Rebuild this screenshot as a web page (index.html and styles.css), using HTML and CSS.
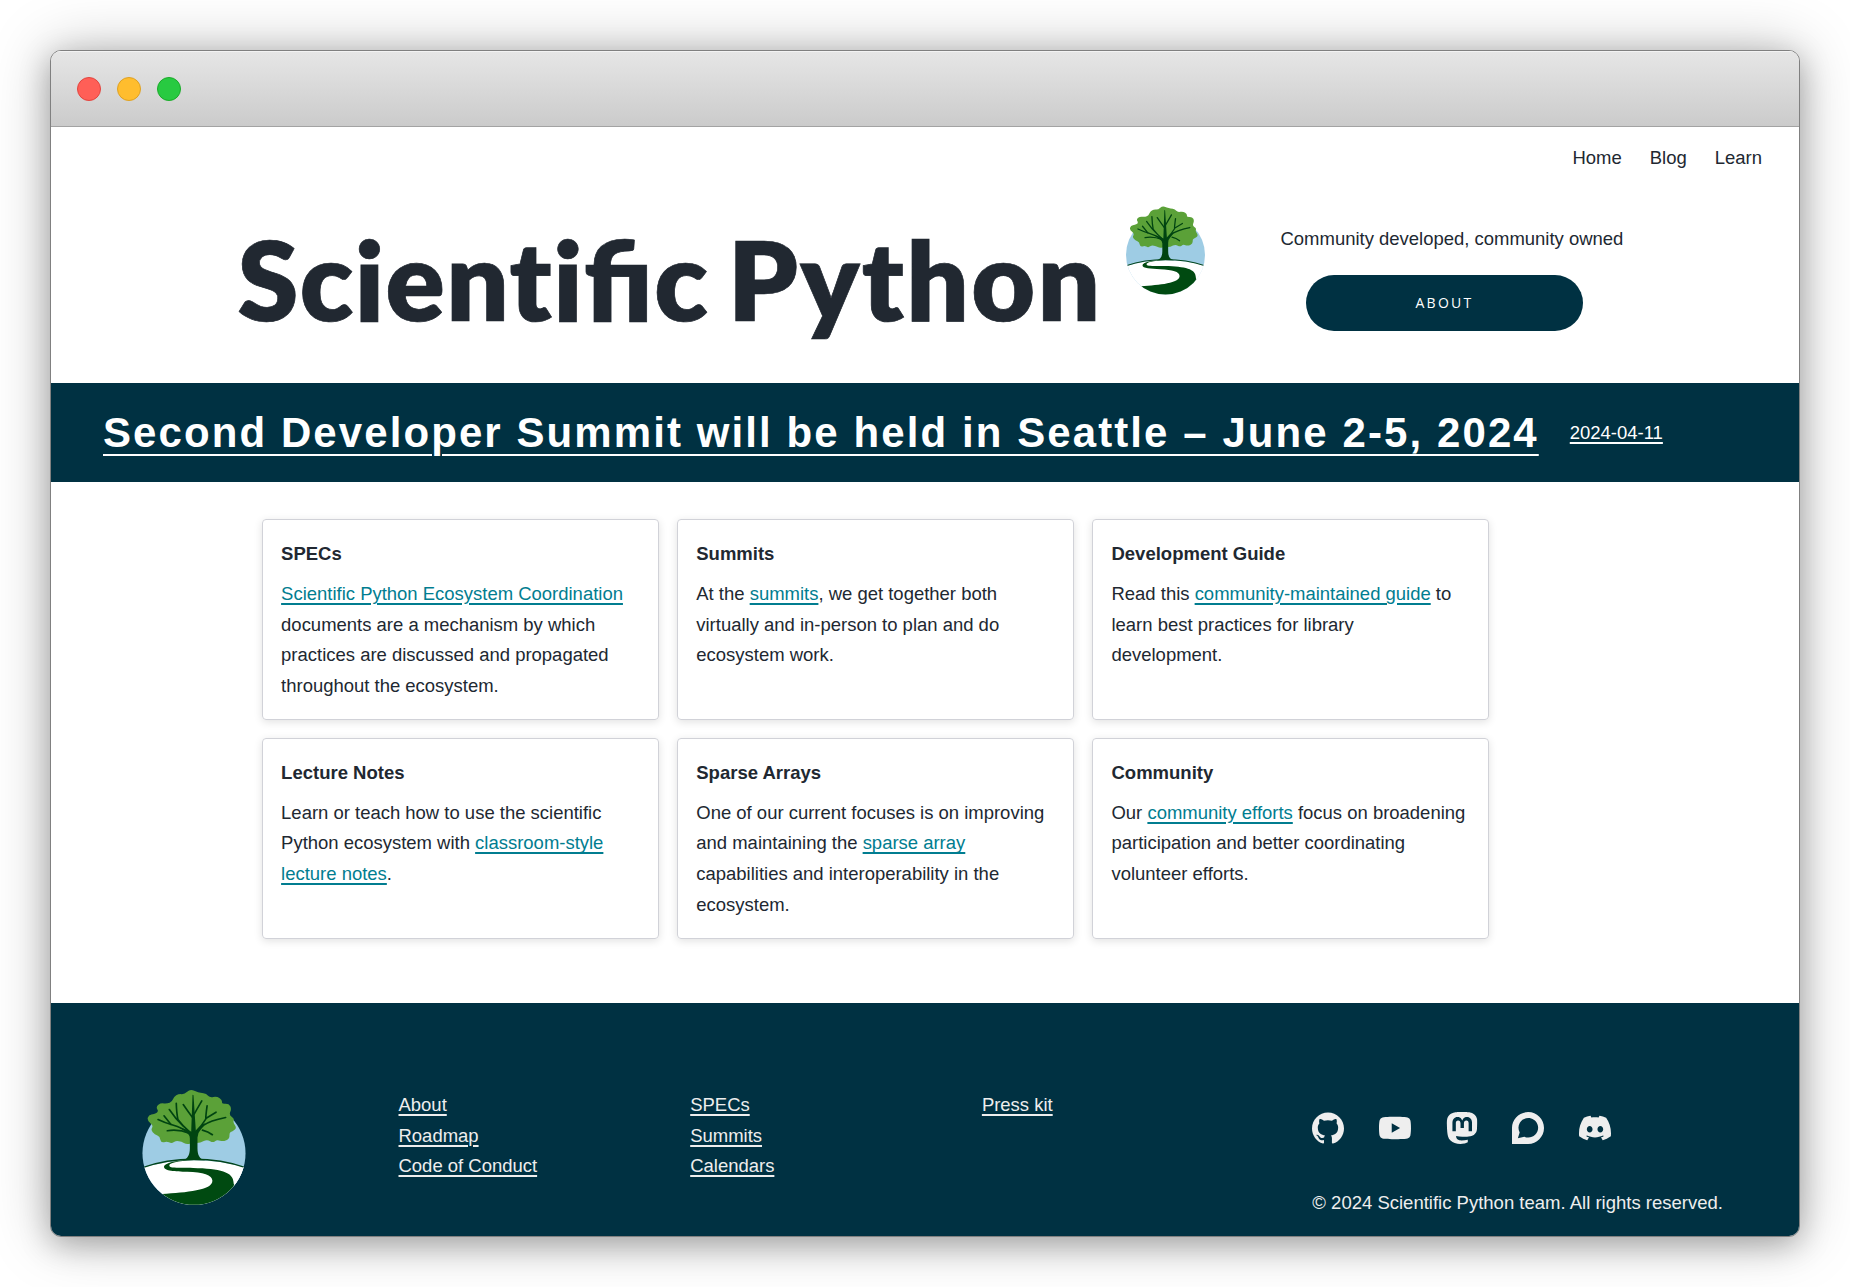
FILE: index.html
```html
<!DOCTYPE html>
<html lang="en">
<head>
<meta charset="utf-8">
<title>Scientific Python</title>
<link rel="stylesheet" href="styles.css">
</head>
<body>
<svg class="defs" width="0" height="0" aria-hidden="true">
  <symbol id="logo" viewBox="37 59 311 347">
    <clipPath id="disc"><circle cx="192.500" cy="250" r="155.500"/></clipPath>
    <g clip-path="url(#disc)">
      <rect x="30" y="60" width="330" height="350" fill="#9ecce4"/>
      <path d="M30 296Q190 246 360 296V420H30Z" fill="#fff"/>
      <path d="M37 293Q110 268 192 268Q275 268 348 293" fill="none" stroke="#00441b" stroke-width="4"/>
      <path d="M165 271C135 272 104 280 102 290C101 304 135 304 172 306C220 308 248 315 248 333C248 362 170 368 96 373L130 410H280L345 350C322 350 312 350 312 339C312 305 270 296 190 294C140 293 118 296 118 287C118 279 140 273 192 271Z" fill="#004a11"/>
      <path d="M312 325V350L330 365L348 292H340C335 312 325 332 312 348Z" fill="#fff"/>
    </g>
    <path d="M172 64Q180 57 189 60Q198 63 205 65.500Q212 67 221 68.500Q230 70 235 76Q240 82 251 80Q262 78 270 84Q278 90 277 95.500Q276 101 287 100.500Q298 100 302 108Q306 116 302 125Q298 134 306 140Q315 146 312 151Q310 156 316 165Q322 174 315 179Q308 184 303.500 186Q299 188 299.500 197Q300 206 290 210.500Q280 215 271 212Q262 208 256 213.500Q250 219 241 213.500Q232 208 222 213Q212 219 201 219Q190 219 180 221Q170 223 162 219Q155 215 147 214Q140 211 132 216Q125 222 117 217Q110 213 102 216.500Q93 219 91 209Q90 200 82 196.500Q74 193 68 186.500Q62 180 66 173Q70 166 61 159Q51 152 53 143Q56 134 64 133Q72 132 79 128.500Q86 124 82 117.500Q77 110 85 103.500Q92 98 102 99.500Q112 100 119 97.500Q126 95 129 87Q132 79 139 75Q146 71 155 71.500Q164 72 172 64Z" fill="#5ba138"/>
    <g fill="none" stroke="#004411" stroke-linecap="round" stroke-linejoin="round">
      <path d="M84 148Q105 158 126 164Q160 174 183 192" stroke-width="5"/>
      <path d="M112 182Q145 176 180 190M102 137L123 163M118 118Q138 148 160 168M139 99Q140 130 144 148M142 146Q158 168 184 190" stroke-width="5"/>
      <path d="M160 103Q175 125 188 142M216 92Q202 116 193 132" stroke-width="5"/>
      <path d="M232 107Q228 135 228 147Q218 164 199 184M259 126L228 145M288 142Q240 152 222 165L199 186M218 180Q235 184 248 194" stroke-width="5"/>
    </g>
    <path d="M188 74Q190 72 191 75L198 182L213 167L228 158L213 178Q203 189 203 202V235C203 257 210 268 226 271H158C172 268 180 257 180 235V205Q180 194 168 186L148 172L174 180L184 185Z" fill="#004411"/>
  </symbol>
</svg>
<div class="window">
  <div class="titlebar"><span class="dot red"></span><span class="dot yellow"></span><span class="dot green"></span></div>
  <nav class="nav"><a>Home</a><a>Blog</a><a>Learn</a></nav>
  <header class="hero">
    <h1 class="title">Scienti<span class="joined">fi</span>c <span class="python">Python</span></h1>
    <svg class="hero-logo"><use href="#logo"/></svg>
    <div class="tagline">
      <p>Community developed, community owned</p>
      <a class="button">ABOUT</a>
    </div>
  </header>
  <section class="news"><a class="headline">Second Developer Summit will be held in Seattle – June 2-5, 2024</a><a class="date">2024-04-11</a></section>
  <main class="cards">
    <article class="card"><h2>SPECs</h2><p><a>Scientific Python Ecosystem Coordination</a> documents are a mechanism by which practices are discussed and propagated throughout the ecosystem.</p></article>
    <article class="card"><h2>Summits</h2><p>At the <a>summits</a>, we get together both virtually and in-person to plan and do ecosystem work.</p></article>
    <article class="card"><h2>Development Guide</h2><p>Read this <a>community-maintained guide</a> to learn best practices for library development.</p></article>
    <article class="card"><h2>Lecture Notes</h2><p>Learn or teach how to use the scientific Python ecosystem with <a>classroom-style lecture notes</a>.</p></article>
    <article class="card"><h2>Sparse Arrays</h2><p>One of our current focuses is on improving and maintaining the <a>sparse array</a> capabilities and interoperability in the ecosystem.</p></article>
    <article class="card"><h2>Community</h2><p>Our <a>community efforts</a> focus on broadening participation and better coordinating volunteer efforts.</p></article>
  </main>
  <footer class="footer">
    <svg class="footer-logo"><use href="#logo"/></svg>
    <ul class="links"><li><a>About</a></li><li><a>Roadmap</a></li><li><a>Code of Conduct</a></li></ul>
    <ul class="links"><li><a>SPECs</a></li><li><a>Summits</a></li><li><a>Calendars</a></li></ul>
    <ul class="links"><li><a>Press kit</a></li></ul>
    <div class="social-block">
      <div class="social">
        <svg viewBox="0 0 24 24"><path d="M12 .297c-6.63 0-12 5.373-12 12 0 5.303 3.438 9.8 8.205 11.385.6.113.82-.258.82-.577 0-.285-.01-1.04-.015-2.04-3.338.724-4.042-1.61-4.042-1.61C4.422 18.07 3.633 17.7 3.633 17.7c-1.087-.744.084-.729.084-.729 1.205.084 1.838 1.236 1.838 1.236 1.07 1.835 2.809 1.305 3.495.998.108-.776.417-1.305.76-1.605-2.665-.3-5.466-1.332-5.466-5.93 0-1.31.465-2.38 1.235-3.22-.135-.303-.54-1.523.105-3.176 0 0 1.005-.322 3.3 1.23.96-.267 1.98-.399 3-.405 1.02.006 2.04.138 3 .405 2.28-1.552 3.285-1.23 3.285-1.23.645 1.653.24 2.873.12 3.176.765.84 1.23 1.91 1.23 3.22 0 4.61-2.805 5.625-5.475 5.92.42.36.81 1.096.81 2.22 0 1.606-.015 2.896-.015 3.286 0 .315.21.69.825.57C20.565 22.092 24 17.592 24 12.297c0-6.627-5.373-12-12-12"/></svg>
        <svg viewBox="0 0 24 24"><path d="M23.498 6.186a3.016 3.016 0 0 0-2.122-2.136C19.505 3.545 12 3.545 12 3.545s-7.505 0-9.377.505A3.017 3.017 0 0 0 .502 6.186C0 8.070 0 12 0 12s0 3.930.502 5.814a3.016 3.016 0 0 0 2.122 2.136c1.871.505 9.376.505 9.376.505s7.505 0 9.377-.505a3.015 3.015 0 0 0 2.122-2.136C24 15.930 24 12 24 12s0-3.930-.502-5.814zM9.545 15.568V8.432L15.818 12l-6.273 3.568z"/></svg>
        <svg viewBox="0 0 24 24"><path d="M23.268 5.313c-.35-2.578-2.617-4.61-5.304-5.004C17.51.242 15.792 0 11.813 0h-.03c-3.98 0-4.835.242-5.288.309C3.882.692 1.496 2.518.917 5.127.64 6.412.61 7.837.661 9.143c.074 1.874.088 3.745.26 5.611.118 1.24.325 2.47.62 3.68.55 2.237 2.777 4.098 4.96 4.857 2.336.792 4.849.923 7.256.38.265-.061.527-.132.786-.213.585-.184 1.27-.39 1.774-.753a.057.057 0 0 0 .023-.043v-1.809a.052.052 0 0 0-.02-.041.053.053 0 0 0-.046-.01 20.282 20.282 0 0 1-4.709.545c-2.73 0-3.463-1.284-3.674-1.818a5.593 5.593 0 0 1-.319-1.433.053.053 0 0 1 .066-.054c1.517.363 3.072.546 4.632.546.376 0 .75 0 1.125-.01 1.57-.044 3.224-.124 4.768-.422.038-.008.077-.015.11-.024 2.435-.464 4.753-1.92 4.989-5.604.008-.145.03-1.52.03-1.67.002-.512.167-3.63-.024-5.545zm-3.748 9.195h-2.561V8.29c0-1.309-.55-1.976-1.67-1.976-1.23 0-1.846.79-1.846 2.35v3.403h-2.546V8.663c0-1.56-.617-2.35-1.848-2.35-1.112 0-1.668.668-1.67 1.977v6.218H4.822V8.102c0-1.31.337-2.35 1.011-3.12.696-.77 1.608-1.164 2.74-1.164 1.311 0 2.302.5 2.962 1.498l.638 1.06.638-1.06c.66-.999 1.65-1.498 2.96-1.498 1.13 0 2.043.395 2.74 1.164.675.77 1.012 1.81 1.012 3.12z"/></svg>
        <svg viewBox="0 0 24 24"><path d="M12.103 0C18.666 0 24 5.485 24 11.997c0 6.51-5.33 11.99-11.9 11.99L0 24V11.79C0 5.28 5.532 0 12.103 0zm.116 4.563c-2.593-.003-4.996 1.352-6.337 3.57-1.33 2.208-1.387 4.957-.148 7.22L4.4 19.61l4.794-1.074c2.745 1.225 5.965.676 8.136-1.39 2.17-2.054 2.86-5.228 1.737-7.997-1.135-2.778-3.84-4.59-6.84-4.585h-.008z"/></svg>
        <svg viewBox="0 0 24 24"><path d="M20.317 4.3698a19.7913 19.7913 0 00-4.8851-1.5152.0741.0741 0 00-.0785.0371c-.211.3753-.4447.8648-.6083 1.2495-1.8447-.2762-3.68-.2762-5.4868 0-.1636-.3933-.4058-.8742-.6177-1.2495a.077.077 0 00-.0785-.037 19.7363 19.7363 0 00-4.8852 1.515.0699.0699 0 00-.0321.0277C.5334 9.0458-.319 13.5799.0992 18.0578a.0824.0824 0 00.0312.0561c2.0528 1.5076 4.0413 2.4228 5.9929 3.0294a.0777.0777 0 00.0842-.0276c.4616-.6304.8731-1.2952 1.226-1.9942a.076.076 0 00-.0416-.1057c-.6528-.2476-1.2743-.5495-1.8722-.8923a.077.077 0 01-.0076-.1277c.1258-.0943.2517-.1923.3718-.2914a.0743.0743 0 01.0776-.0105c3.9278 1.7933 8.18 1.7933 12.0614 0a.0739.0739 0 01.0785.0095c.1202.099.246.1981.3728.2924a.077.077 0 01-.0066.1276 12.2986 12.2986 0 01-1.873.8914.0766.0766 0 00-.0407.1067c.3604.698.7719 1.3628 1.225 1.9932a.076.076 0 00.0842.0286c1.961-.6067 3.9495-1.5219 6.0023-3.0294a.077.077 0 00.0313-.0552c.5004-5.177-.8382-9.6739-3.5485-13.6604a.061.061 0 00-.0312-.0286zM8.02 15.3312c-1.1825 0-2.1569-1.0857-2.1569-2.419 0-1.3332.9555-2.4189 2.157-2.4189 1.2108 0 2.1757 1.0952 2.1568 2.419 0 1.3332-.9555 2.4189-2.1569 2.4189zm7.9748 0c-1.1825 0-2.1569-1.0857-2.1569-2.419 0-1.3332.9554-2.4189 2.1569-2.4189 1.2108 0 2.1757 1.0952 2.1568 2.419 0 1.3332-.946 2.4189-2.1568 2.4189Z"/></svg>
      </div>
      <p>© 2024 Scientific Python team. All rights reserved.</p>
    </div>
  </footer>
</div>
</body>
</html>
```
FILE: styles.css
```css
* { box-sizing: border-box; }
body { margin: 0; padding: 50px; background: #fff; height: 1287px; overflow: hidden; font: 18.480px/30.600px "Liberation Sans", Arial, sans-serif; color: #212831; }
h1, h2, p, ul { margin: 0; padding: 0; }
.defs { display: block; height: 0; }
.window { width: 1750px; height: 1187px; border: 1px solid #808080; border-radius: 11px; overflow: hidden; background: #fff; box-shadow: 0 0 60px rgba(0,0,0,.25), 0 8px 30px rgba(0,0,0,.25); display: flex; flex-direction: column; }
.titlebar { height: 76px; flex: none; display: flex; gap: 16px; padding: 26px 0 0 26px; background: linear-gradient(#e6e6e6, #cbcbcb); border-bottom: 1px solid #a3a3a3; box-shadow: inset 0 1px #f3f3f3; }
.dot { width: 24px; height: 24px; border-radius: 50%; border: 1px solid; }
.red { background: #ff5f57; border-color: #e2453f; }
.yellow { background: #ffbd2e; border-color: #dea123; }
.green { background: #28ca41; border-color: #1aab29; }
.nav { display: flex; justify-content: flex-end; gap: 28px; padding: 16px 37px 0 0; height: 61px; flex: none; }
.hero { height: 195px; flex: none; display: flex; padding-left: 186.500px; }
.title { width: 888.500px; font: 800 110px/181px Lato, sans-serif; letter-spacing: 1.400px; word-spacing: -8px; -webkit-text-stroke: .7px #212831; white-space: nowrap; }
.joined { letter-spacing: 0; margin-right: 1.400px; }
.python { letter-spacing: 2.300px; }
.hero-logo { width: 79px; height: 89px; margin-top: 18px; flex: none; }
.tagline { margin-left: 75.500px; padding-top: 36px; }
.button { display: block; width: 277px; height: 56px; margin: 20px 0 0 25.500px; border-radius: 28px; background: #003142; color: #fff; text-align: center; font: 14px/56px "Open Sans", sans-serif; letter-spacing: 2.300px; }
.news { height: 99px; flex: none; display: flex; align-items: center; gap: 31px; padding: 2px 0 0 52px; background: #003142; color: #fff; }
.headline { font-size: 41.970px; font-weight: 700; letter-spacing: .05em; text-decoration: underline 2px; text-underline-offset: 7px; white-space: nowrap; }
.date { text-decoration: underline 2px; text-underline-offset: 3px; }
.cards { display: grid; grid-template-columns: repeat(3, 396.700px); grid-auto-rows: 200.800px; gap: 18px 18.500px; padding: 37px 0 0 211px; height: 521px; flex: none; }
.card { border: 1px solid #d1d2d8; border-radius: 4px; padding: 19.300px 20px 0 18.100px; box-shadow: 0 2px 8px rgba(0,0,0,.12); }
.card h2 { font: 700 18.500px/30.600px "Liberation Sans", sans-serif; margin-bottom: 9.200px; }
.card a { color: #017d90; text-decoration: underline 2px; text-underline-offset: 3px; }
.footer { flex: 1; background: #003142; color: #eee; display: flex; padding-left: 91px; }
.footer-logo { width: 104px; height: 115px; margin: 87px 152.500px 0 0; flex: none; }
.links { list-style: none; width: 291.700px; padding-top: 87px; flex: none; }
.links a { text-decoration: underline 2px; text-underline-offset: 3px; }
.social-block { margin-left: 38.400px; padding-top: 109px; }
.social { display: flex; gap: 34.800px; }
.social svg { width: 32px; height: 32px; fill: #eee; }
.social-block p { margin: 44px 0 0 .4px; font-size: 18.500px; white-space: nowrap; }
```
